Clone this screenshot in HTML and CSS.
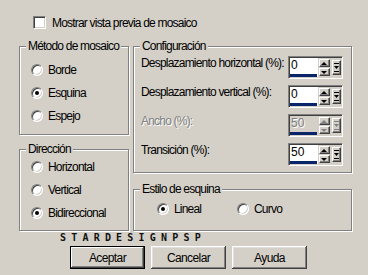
FILE: index.html
```html
<!DOCTYPE html>
<html lang="es">
<head>
  <meta charset="UTF-8" />
  <title>Mosaico</title>
  <link rel="stylesheet" href="styles.css">
</head>
<body>
  <div class="dialog">
    <label class="check-row"><span class="checkbox"></span>Mostrar vista previa de mosaico</label>

    <div class="panels">
      <div class="col">
        <div class="group g-metodo">
          <span class="group-title">Método de mosaico</span>
          <label class="radio"><span class="dot"></span>Borde</label>
          <label class="radio"><span class="dot checked"></span>Esquina</label>
          <label class="radio"><span class="dot"></span>Espejo</label>
        </div>
        <div class="group g-direccion">
          <span class="group-title">Dirección</span>
          <label class="radio"><span class="dot"></span>Horizontal</label>
          <label class="radio"><span class="dot"></span>Vertical</label>
          <label class="radio"><span class="dot checked"></span>Bidireccional</label>
        </div>
      </div>

      <div class="col">
        <div class="group g-config">
          <span class="group-title">Configuración</span>
          <div class="field-row">
            <span class="field-label">Desplazamiento horizontal (%):</span>
            <div class="spin">
              <div class="spin-field"><span class="spin-value">0</span><span class="spin-bar"></span></div>
              <div class="spin-arrows"><span class="sbtn up"></span><span class="sbtn down"></span></div>
              <span class="sbtn expand"><svg width="5" height="9" viewBox="0 0 5 9"><rect x="0" y="0" width="5" height="1"/><path d="M0 3h5L2.5 6z"/><rect x="0" y="8" width="5" height="1"/></svg></span>
            </div>
          </div>
          <div class="field-row">
            <span class="field-label">Desplazamiento vertical (%):</span>
            <div class="spin">
              <div class="spin-field"><span class="spin-value">0</span><span class="spin-bar"></span></div>
              <div class="spin-arrows"><span class="sbtn up"></span><span class="sbtn down"></span></div>
              <span class="sbtn expand"><svg width="5" height="9" viewBox="0 0 5 9"><rect x="0" y="0" width="5" height="1"/><path d="M0 3h5L2.5 6z"/><rect x="0" y="8" width="5" height="1"/></svg></span>
            </div>
          </div>
          <div class="field-row disabled">
            <span class="field-label">Ancho (%):</span>
            <div class="spin">
              <div class="spin-field"><span class="spin-value">50</span><span class="spin-bar"></span></div>
              <div class="spin-arrows"><span class="sbtn up"></span><span class="sbtn down"></span></div>
              <span class="sbtn expand"><svg width="5" height="9" viewBox="0 0 5 9"><rect x="0" y="0" width="5" height="1"/><path d="M0 3h5L2.5 6z"/><rect x="0" y="8" width="5" height="1"/></svg></span>
            </div>
          </div>
          <div class="field-row">
            <span class="field-label">Transición (%):</span>
            <div class="spin">
              <div class="spin-field"><span class="spin-value">50</span><span class="spin-bar"></span></div>
              <div class="spin-arrows"><span class="sbtn up"></span><span class="sbtn down"></span></div>
              <span class="sbtn expand"><svg width="5" height="9" viewBox="0 0 5 9"><rect x="0" y="0" width="5" height="1"/><path d="M0 3h5L2.5 6z"/><rect x="0" y="8" width="5" height="1"/></svg></span>
            </div>
          </div>
        </div>
        <div class="group g-estilo">
          <span class="group-title">Estilo de esquina</span>
          <label class="radio lineal"><span class="dot checked"></span>Lineal</label>
          <label class="radio"><span class="dot"></span>Curvo</label>
        </div>
      </div>
    </div>

    <div class="watermark">STARDESIGNPSP</div>

    <div class="buttons">
      <button class="btn default">Aceptar</button>
      <button class="btn">Cancelar</button>
      <button class="btn">Ayuda</button>
    </div>
  </div>
</body>
</html>
```

FILE: styles.css
```css
:root {
  --face: #d4d0c8;
  --shadow: #808080;
  --dark: #404040;
  --light: #fff;
  --font: "Liberation Sans", Arial, sans-serif;
}

body {
  margin: 0;
  background: var(--face);
  font-family: var(--font);
  font-size: 12px;
  letter-spacing: -0.8px;
  white-space: nowrap;
  color: #000;
}

.dialog {
  padding: 16px 0 0 19px;
}

/* top checkbox */
.check-row {
  display: flex;
  align-items: center;
  margin-left: 14px;
  height: 13px;
  gap: 6px;
}

.checkbox {
  width: 13px;
  height: 13px;
  box-sizing: border-box;
  background: #fff;
  border: 1px solid;
  border-color: var(--shadow) var(--light) var(--light) var(--shadow);
  box-shadow: inset 1px 1px var(--dark), inset -1px -1px var(--face);
}

/* group boxes */
.panels {
  display: grid;
  grid-template-columns: 110px 219px;
  column-gap: 4px;
  margin-top: 17px;
}

.col {
  display: flex;
  flex-direction: column;
}

.group {
  position: relative;
  box-sizing: border-box;
  border: 1px solid var(--shadow);
  box-shadow: 1px 1px 0 var(--light), inset 1px 1px 0 var(--light);
  display: flex;
  flex-direction: column;
}

.group-title {
  position: absolute;
  top: -8px;
  left: 6px;
  padding: 0 2px;
  background: var(--face);
  line-height: 15px;
}

.g-metodo {
  height: 89px;
  padding: 15px 0 0 11px;
  gap: 7px;
}

.g-direccion {
  height: 82px;
  margin-top: 14px;
  padding: 9px 0 0 11px;
  gap: 7px;
}

.g-config {
  height: 127px;
  padding: 9px 8px 0 7px;
  gap: 6px;
}

.g-estilo {
  height: 42px;
  margin-top: 16px;
  padding: 11px 0 0 23px;
  flex-direction: row;
}

/* radios */
.radio {
  display: flex;
  align-items: center;
  height: 16px;
  gap: 5px;
}

.lineal {
  width: 80px;
}

.dot {
  position: relative;
  width: 12px;
  height: 12px;
  box-sizing: border-box;
  border-radius: 50%;
  background: #fff;
  border: 1px solid;
  border-color: var(--shadow) var(--light) var(--light) var(--shadow);
  box-shadow: inset 1px 1px var(--dark), inset -1px -1px var(--face);
}

.dot.checked::after {
  content: "";
  position: absolute;
  left: 3px;
  top: 3px;
  width: 4px;
  height: 4px;
  border-radius: 50%;
  background: #000;
}

/* configuracion rows */
.field-row {
  display: flex;
  justify-content: space-between;
  align-items: flex-start;
  height: 23px;
}

.field-label {
  line-height: 15px;
}

.disabled .field-label,
.disabled .spin-value {
  color: var(--shadow);
  text-shadow: 1px 1px 0 var(--light);
}

.spin {
  display: flex;
  align-items: center;
  width: 55px;
  height: 23px;
  box-sizing: border-box;
  padding: 1px;
  border: 1px solid;
  border-color: var(--shadow) var(--light) var(--light) var(--shadow);
  box-shadow: inset 1px 1px var(--dark), inset -1px -1px var(--face);
}

.spin-field {
  display: flex;
  flex-direction: column;
  width: 29px;
  height: 100%;
  background: #fff;
}

.disabled .spin-field {
  background: var(--face);
}

.spin-value {
  flex: 1;
  padding-left: 1px;
  line-height: 15px;
  letter-spacing: 0;
}

.spin-bar {
  width: 27px;
  height: 3px;
  background: #0a246a;
}

.spin-arrows {
  display: flex;
  flex-direction: column;
  gap: 1px;
  margin-left: 1px;
}

.sbtn {
  display: flex;
  align-items: center;
  justify-content: center;
  box-sizing: border-box;
  background: var(--face);
  border: 1px solid;
  border-color: var(--light) var(--dark) var(--dark) var(--light);
  box-shadow: inset -1px -1px var(--shadow);
}

.up,
.down {
  width: 11px;
  height: 8px;
}

.up::after,
.down::after {
  content: "";
  margin-right: 1px;
  border-left: 3px solid transparent;
  border-right: 3px solid transparent;
}

.up::after {
  border-bottom: 3px solid #000;
}

.down::after {
  border-top: 3px solid #000;
}

.disabled .up::after {
  border-bottom-color: var(--shadow);
}

.disabled .down::after {
  border-top-color: var(--shadow);
}

.expand {
  width: 9px;
  height: 15px;
  margin-left: 2px;
}

.expand svg {
  fill: #000;
}

.disabled .expand svg {
  fill: var(--shadow);
}

/* watermark */
.watermark {
  margin: 2px 0 0 41px;
  font-family: "DejaVu Sans Mono", monospace;
  font-weight: bold;
  font-size: 10px;
  line-height: 9px;
  letter-spacing: 5.2px;
  color: #111;
}

/* dialog buttons */
.buttons {
  display: flex;
  gap: 6px;
  margin: 4px 0 0 51px;
}

.btn {
  width: 75px;
  height: 23px;
  padding: 0;
  font-family: var(--font);
  font-size: 12px;
  letter-spacing: -0.6px;
  color: #000;
  background: var(--face);
  border: none;
  box-shadow: inset -1px -1px var(--dark), inset 1px 1px var(--light),
    inset -2px -2px var(--shadow), inset 2px 2px #dfdfdf;
}

.btn.default {
  border: 1px solid #000;
  box-shadow: inset -1px -1px var(--dark), inset 1px 1px var(--light),
    inset -2px -2px var(--shadow);
}
```
